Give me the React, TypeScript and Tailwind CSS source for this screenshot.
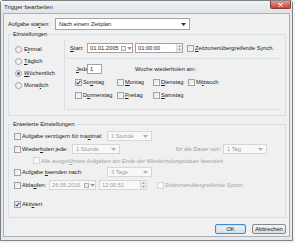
import type { ReactNode } from 'react';

function Check({ checked = false, disabled = false }: { checked?: boolean; disabled?: boolean }) {
  return (
    <span
      className={`w-[7px] h-[7px] shrink-0 border flex items-center justify-center ${
        disabled ? 'border-[#d3d3d3] bg-[#f7f7f7]' : 'border-[#a2a2a2] bg-gradient-to-br from-[#e6e6e6] to-[#fcfcfc]'
      }`}
    >
      {checked && (
        <svg width="5" height="5" viewBox="0 0 5 5">
          <path d="M0.6 2.6 L1.9 3.9 L4.4 0.8" fill="none" stroke="#3b4f8a" strokeWidth="1.1" />
        </svg>
      )}
    </span>
  );
}

function Radio({ checked = false }: { checked?: boolean }) {
  return (
    <span className="w-[7px] h-[7px] shrink-0 rounded-full border border-[#a2a2a2] bg-gradient-to-br from-[#e6e6e6] to-white flex items-center justify-center">
      {checked && <span className="w-[3px] h-[3px] rounded-full bg-[#2f63ad]" />}
    </span>
  );
}

function Arrow({ color = '#333' }: { color?: string }) {
  return (
    <svg width="5" height="3" viewBox="0 0 5 3">
      <path d="M0 0h5L2.5 3z" fill={color} />
    </svg>
  );
}

function Combo({ w, text, disabled = false, h = 'h-[10px]' }: { w: string; text: string; disabled?: boolean; h?: string }) {
  return (
    <div
      className={`${w} ${h} shrink-0 border flex items-center justify-between pl-[3px] pr-[3px] ${
        disabled ? 'border-[#d6d6d6] bg-[#f8f8f8] text-[#9b9b9b]' : 'border-[#a3a3a3] bg-white'
      }`}
    >
      <span>{text}</span>
      <Arrow color={disabled ? '#b0b0b0' : '#333'} />
    </div>
  );
}

function DateBox({ w, text, disabled = false }: { w: string; text: string; disabled?: boolean }) {
  return (
    <div className={`${w} h-[10px] shrink-0 border flex items-center ${disabled ? 'border-[#d6d6d6] bg-[#f8f8f8] text-[#9b9b9b]' : 'border-[#a3a3a3] bg-white'}`}>
      <span className="flex-1 pl-[2px]">{text}</span>
      <span className="w-[12px] h-full flex items-center justify-center gap-[1px]">
        <span className="w-[5px] h-[5px] border border-[#b0b0b0] bg-[#ececec]" />
        <Arrow color="#9a9a9a" />
      </span>
    </div>
  );
}

function TimeBox({ w, text, disabled = false }: { w: string; text: string; disabled?: boolean }) {
  return (
    <div className={`${w} h-[10px] shrink-0 border flex items-center ${disabled ? 'border-[#d6d6d6] bg-[#f8f8f8] text-[#9b9b9b]' : 'border-[#a3a3a3] bg-white'}`}>
      <span className="flex-1 pl-[2px]">{text}</span>
      <span className="w-[6px] h-full flex flex-col border-l border-[#d6d6d6] bg-[#f1f1f1]">
        <span className="flex-1 flex items-center justify-center border-b border-[#dcdcdc]">
          <svg width="3" height="2" viewBox="0 0 3 2"><path d="M0 2h3L1.5 0z" fill="#a0a0a0" /></svg>
        </span>
        <span className="flex-1 flex items-center justify-center">
          <svg width="3" height="2" viewBox="0 0 3 2"><path d="M0 0h3L1.5 2z" fill="#a0a0a0" /></svg>
        </span>
      </span>
    </div>
  );
}

function Day({ w, label }: { w: string; label: ReactNode }) {
  return (
    <div className={`${w} flex items-center gap-[1px]`}>
      <Check />
      <span>{label}</span>
    </div>
  );
}

export default function App() {
  return (
    <div className="w-[295px] h-[243px] bg-[#f3f3f3] overflow-hidden font-['Liberation_Sans',Arial,sans-serif] text-[5.7px] text-[#222] leading-[8px]">
      <div className="w-[293px] h-[241px] border border-[#7d8288] rounded-t-[3px] bg-[#e6e9ec] flex flex-col">
        {/* title bar */}
        <div className="h-[12px] flex items-start bg-gradient-to-b from-[#f2f3f5] to-[#e0e3e7]">
          <span className="pl-[3px] pt-[2px] text-[6px] text-[#2a2a2a]">Trigger bearbeiten</span>
          <div className="ml-auto mr-[1px] w-[21px] h-[8px] rounded-b-[2px] border border-t-0 border-[#8a3a32] bg-gradient-to-b from-[#e49b8f] to-[#c4402f] flex items-center justify-center">
            <svg width="5" height="4" viewBox="0 0 5 4">
              <path d="M0.5 0.3 L4.5 3.7 M4.5 0.3 L0.5 3.7" stroke="white" strokeWidth="1.1" />
            </svg>
          </div>
        </div>

        {/* body */}
        <div className="ml-[2px] mr-[2px] h-[224px] border border-[#aab1b9] bg-[#f0f0f0] flex flex-col">
          <div className="mt-[4px] h-[12px] pl-[4px] flex items-center">
            <span className="w-[47px]">
              Aufgabe sta<u>r</u>ten:
            </span>
            <Combo w="w-[135px]" h="h-[12px]" text="Nach einem Zeitplan" />
          </div>

          {/* Einstellungen */}
          <fieldset className="ml-[4px] w-[278px] border border-[#d5dfe5] pb-[5px]">
            <legend className="ml-[2px] px-[2px] leading-[8px]">Einstellungen</legend>
            <div className="mt-[2px] flex">
              <div className="w-[55px] pt-[3px] pl-[6px] flex flex-col">
                <div className="h-[12px] flex items-center gap-[2px]">
                  <Radio />
                  <span>
                    E<u>i</u>nmal
                  </span>
                </div>
                <div className="h-[12px] flex items-center gap-[2px]">
                  <Radio />
                  <span>
                    <u>T</u>äglich
                  </span>
                </div>
                <div className="h-[12px] flex items-center gap-[2px]">
                  <Radio checked />
                  <span>
                    <u>W</u>öchentlich
                  </span>
                </div>
                <div className="h-[12px] flex items-center gap-[2px]">
                  <Radio />
                  <span>
                    Monat<u>l</u>ich
                  </span>
                </div>
              </div>

              <div className="w-[218px] border-l border-[#d5dfe5] flex flex-col">
                <div className="mt-[2px] h-[12px] pl-[5px] flex items-center">
                  <span className="w-[17px]">
                    <u>S</u>tart:
                  </span>
                  <DateBox w="w-[46px]" text="01.01.2005" />
                  <div className="ml-[2px]">
                    <TimeBox w="w-[48px]" text="01:00:00" />
                  </div>
                  <div className="ml-[4px] flex items-center gap-[1px]">
                    <Check />
                    <span>
                      <u>Z</u>eitzonenübergreifende Synch.
                    </span>
                  </div>
                </div>
                <div className="mt-[4px] mx-[2px] h-px bg-[#d5dfe5]" />
                <div className="mt-[4px] h-[12px] pl-[11px] flex items-center">
                  <span className="w-[11px]">
                    <u>J</u>ede
                  </span>
                  <div className="w-[15px] h-[10px] border border-[#a3a3a3] bg-white pl-[2px] flex items-center">1</div>
                  <span className="ml-[33px]">Woche wiederholen am:</span>
                </div>
                <div className="mt-[1px] h-[12px] pl-[10px] flex items-center">
                  <div className="w-[42px] flex items-center gap-[1px]">
                    <Check checked />
                    <span>
                      So<u>n</u>ntag
                    </span>
                  </div>
                  <Day w="w-[36px]" label={<><u>M</u>ontag</>} />
                  <Day w="w-[35px]" label={<><u>D</u>ienstag</>} />
                  <Day w="w-[50px]" label={<>Mi<u>t</u>twoch</>} />
                </div>
                <div className="mt-[1px] h-[12px] pl-[10px] flex items-center">
                  <Day w="w-[42px]" label={<>D<u>o</u>nnerstag</>} />
                  <Day w="w-[36px]" label={<><u>F</u>reitag</>} />
                  <Day w="w-[35px]" label={<><u>S</u>amstag</>} />
                </div>
                <div className="mt-[8px] mx-[2px] h-px bg-[#d5dfe5]" />
              </div>
            </div>
          </fieldset>

          {/* Erweiterte Einstellungen */}
          <fieldset className="mt-[4px] ml-[4px] w-[278px] border border-[#d5dfe5] pb-[7px]">
            <legend className="ml-[2px] px-[2px] leading-[8px]">Erweiterte Einstellungen</legend>

            <div className="mt-[2px] h-[12px] pl-[5px] flex items-center">
              <Check />
              <span className="ml-[1px] w-[85px]">
                Aufgabe verzögern für ma<u>x</u>imal:
              </span>
              <Combo w="w-[45px]" text="1 Stunde" disabled />
            </div>

            <div className="mt-[1px] h-[12px] pl-[5px] flex items-center">
              <Check />
              <span className="ml-[1px] w-[50px]">
                Wieder<u>h</u>olen jede:
              </span>
              <Combo w="w-[48px]" text="1 Stunde" disabled />
              <span className="w-[101px] text-right text-[#9b9b9b]">für die Dauer von:</span>
              <div className="ml-[2px]">
                <Combo w="w-[44px]" text="1 Tag" disabled />
              </div>
            </div>

            <div className="h-[11px] pl-[24px] flex items-center">
              <Check disabled />
              <span className="ml-[1px] text-[#a3a3a3]">
                Alle ausgef<u>ü</u>hrten Aufgaben am Ende der Wiederholungsdauer beenden
              </span>
            </div>

            <div className="h-[12px] pl-[5px] flex items-center">
              <Check />
              <span className="ml-[1px] w-[85px]">
                Aufgabe <u>b</u>eenden nach:
              </span>
              <Combo w="w-[45px]" text="3 Tage" disabled />
            </div>

            <div className="mt-[1px] h-[12px] pl-[5px] flex items-center">
              <Check />
              <span className="ml-[1px] w-[27px]">
                Abla<u>u</u>fen:
              </span>
              <DateBox w="w-[47px]" text="26.05.2016" disabled />
              <div className="ml-[3px]">
                <TimeBox w="w-[48px]" text="12:00:51" disabled />
              </div>
              <div className="ml-[10px] flex items-center gap-[1px]">
                <Check disabled />
                <span className="text-[#a3a3a3]">Zeitzonenübergreifende Synch.</span>
              </div>
            </div>

            <div className="mt-[7px] h-[12px] pl-[5px] flex items-center">
              <Check checked />
              <span className="ml-[1px]">
                Akti<u>v</u>iert
              </span>
            </div>
          </fieldset>

          <div className="mt-[6px] pr-[3px] flex justify-end gap-[6px]">
            <button className="w-[31px] h-[10px] rounded-[2px] border border-[#3c8ad0] bg-gradient-to-b from-[#f4f4f4] to-[#dcdcdc] shadow-[inset_0_0_0_1px_#c4e4fb] flex items-center justify-center">
              OK
            </button>
            <button className="w-[34px] h-[10px] rounded-[2px] border border-[#8a8a8a] bg-gradient-to-b from-[#f4f4f4] to-[#dcdcdc] flex items-center justify-center">
              Abbrechen
            </button>
          </div>
        </div>
      </div>
    </div>
  );
}
